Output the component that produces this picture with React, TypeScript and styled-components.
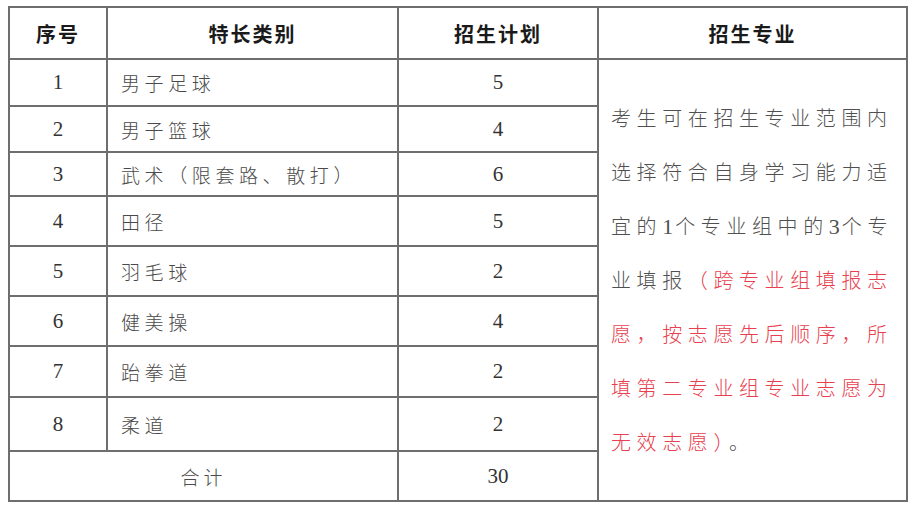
import styled, { createGlobalStyle } from 'styled-components';

const GlobalStyle = createGlobalStyle`
	html, body {
		margin: 0;
		padding: 0;
		background: #ffffff;
	}
`;

const rows = [
	{ no: '1', name: '男子足球', plan: '5', h: 47 },
	{ no: '2', name: '男子篮球', plan: '4', h: 46 },
	{ no: '3', name: '武术（限套路、散打）', plan: '6', h: 44 },
	{ no: '4', name: '田径', plan: '5', h: 50 },
	{ no: '5', name: '羽毛球', plan: '2', h: 50 },
	{ no: '6', name: '健美操', plan: '4', h: 50 },
	{ no: '7', name: '跆拳道', plan: '2', h: 51 },
	{ no: '8', name: '柔道', plan: '2', h: 54 },
];

type Kind = 'plain' | 'red' | 'digit';

// each line of the note, split into runs
const noteLines: [string, Kind][][] = [
	[['考生可在招生专业范围内', 'plain']],
	[['选择符合自身学习能力适', 'plain']],
	[
		['宜的', 'plain'],
		['1', 'digit'],
		['个专业组中的', 'plain'],
		['3', 'digit'],
		['个专', 'plain'],
	],
	[['业填报', 'plain'], ['（跨专业组填报志', 'red']],
	[['愿，按志愿先后顺序，所', 'red']],
	[['填第二专业组专业志愿为', 'red']],
	[['无效志愿）', 'red'], ['。', 'plain']],
];

export default function App() {
	return (
		<>
			<GlobalStyle />
			<Page>
				<Table>
					<colgroup>
						<col style={{ width: 98 }} />
						<col style={{ width: 291 }} />
						<col style={{ width: 200 }} />
						<col style={{ width: 309 }} />
					</colgroup>
					<thead>
						<tr>
							<HeadCell $sep>序号</HeadCell>
							<HeadCell>特长类别</HeadCell>
							<HeadCell>招生计划</HeadCell>
							<HeadCell>招生专业</HeadCell>
						</tr>
					</thead>
					<tbody>
						{rows.map((r, i) => (
							<tr key={r.no} style={{ height: r.h }}>
								<NumCell $sep>{r.no}</NumCell>
								<NameCell>{r.name}</NameCell>
								<NumCell>{r.plan}</NumCell>
								{i === 0 && (
									<NoteCell rowSpan={rows.length + 1}>
										{noteLines.map((line, li) => (
											<NoteLine key={li}>
												{line.map(([text, kind], si) => (
													<NoteText key={si} $kind={kind}>
														{text}
													</NoteText>
												))}
											</NoteLine>
										))}
									</NoteCell>
								)}
							</tr>
						))}
						<tr style={{ height: 50 }}>
							<TotalCell colSpan={2}>合计</TotalCell>
							<NumCell>30</NumCell>
						</tr>
					</tbody>
				</Table>
			</Page>
		</>
	);
}

const Page = styled.div`
	padding: 6px 0 0 8px;
`;

const Table = styled.table`
	border-collapse: collapse;
	table-layout: fixed;
	width: 898px;
	border: 2px solid #7a7a7a;

	td,
	th {
		border: 2px solid #6e6e6e;
		padding: 0;
	}
`;

const HeadCell = styled.th<{ $sep?: boolean }>`
	height: 50px;
	text-align: center;
	font-family: 'Noto Sans CJK SC', sans-serif;
	font-size: 20px;
	font-weight: 700;
	letter-spacing: 2px;
	color: #1a1a1a;
	&& {
		${({ $sep }) => $sep && 'border-right: 1px solid #111;'}
	}
`;

const NumCell = styled.td<{ $sep?: boolean }>`
	text-align: center;
	font-family: 'Liberation Serif', serif;
	font-size: 21px;
	color: #333;
	&& {
		${({ $sep }) => $sep && 'border-right: 1px solid #111;'}
	}
`;

const NameCell = styled.td`
	padding-left: 13px !important;
	font-family: 'Noto Sans CJK SC', sans-serif;
	font-size: 19px;
	font-weight: 300;
	letter-spacing: 4.6px;
	color: #4a4a4a;
`;

const TotalCell = styled.td`
	text-align: center;
	font-family: 'Noto Sans CJK SC', sans-serif;
	font-size: 19px;
	font-weight: 300;
	letter-spacing: 4px;
	color: #4a4a4a;
`;

const NoteCell = styled.td`
	vertical-align: middle;
	padding: 0 0 0 12px !important;
`;

const NoteLine = styled.div`
	height: 54px;
	line-height: 54px;
	white-space: nowrap;
	font-family: 'Noto Sans CJK SC', sans-serif;
	font-size: 20px;
	font-weight: 300;
	letter-spacing: 5.6px;
`;

const NoteText = styled.span<{ $kind: Kind }>`
	color: ${({ $kind }) => ($kind === 'red' ? '#e8404e' : '#505050')};
	font-family: ${({ $kind }) =>
		$kind === 'digit' ? "'Liberation Serif', serif" : "'Noto Sans CJK SC', sans-serif"};
	font-size: ${({ $kind }) => ($kind === 'digit' ? '22px' : '20px')};
	letter-spacing: ${({ $kind }) => ($kind === 'digit' ? '2px' : '5.6px')};
`;
